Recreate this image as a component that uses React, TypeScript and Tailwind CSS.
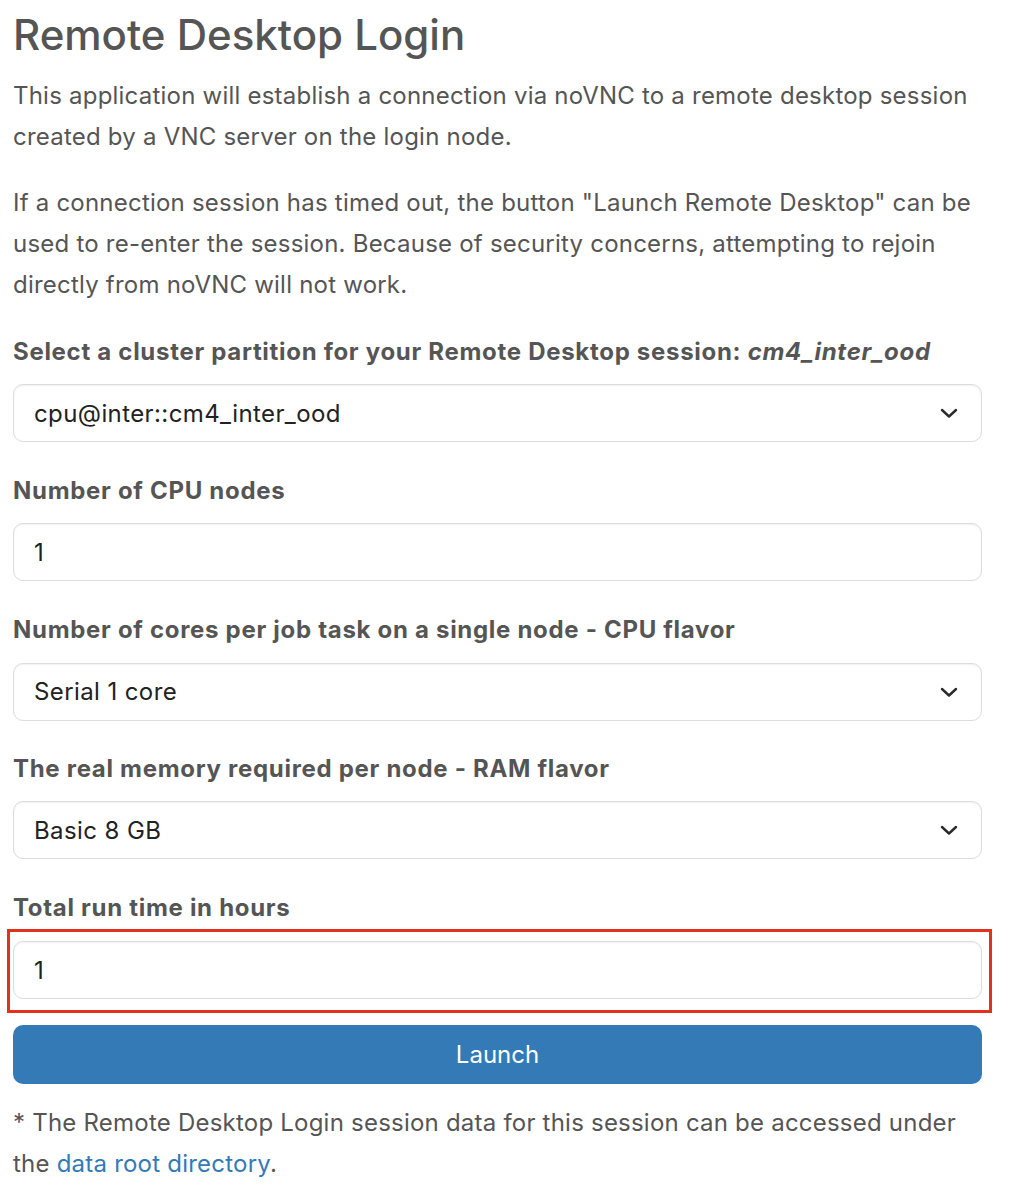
import React from "react";

function Chevron() {
  return (
    <svg width="18" height="12" viewBox="0 0 18 12" fill="none" className="shrink-0">
      <path d="M2 3 L9 9.5 L16 3" stroke="#2b2b2b" strokeWidth="2.4" strokeLinecap="round" strokeLinejoin="round" />
    </svg>
  );
}

function SelectBox({ value }: { value: string }) {
  return (
    <div className="flex h-[58px] items-center justify-between rounded-[10px] border border-[#dcdcdc] bg-white pl-[20px] pr-[23px] tracking-[0.4px] text-[#222] shadow-[inset_0_1px_2px_rgba(0,0,0,0.06)]">
      <span>{value}</span>
      <Chevron />
    </div>
  );
}

function InputBox({ value }: { value: string }) {
  return (
    <div className="flex h-[58px] items-center rounded-[10px] border border-[#dcdcdc] bg-white pl-[20px] tracking-[0.4px] text-[#222] shadow-[inset_0_1px_2px_rgba(0,0,0,0.06)]">
      <span>{value}</span>
    </div>
  );
}

function Label({ children }: { children: React.ReactNode }) {
  return <div className="font-bold leading-[41px] tracking-[0.7px] text-[#555]">{children}</div>;
}

export default function App() {
  return (
    <div
      className="w-[1010px] bg-white pl-[13px] pr-[28px] pt-[11px] text-[24px] leading-[41px] tracking-[0.22px] text-[#555]"
      style={{ fontFamily: "Inter, 'Liberation Sans', sans-serif" }}
    >
      <h1 className="text-[42px] font-medium leading-[48px] tracking-normal text-[#555]">Remote Desktop Login</h1>
      <p className="mt-[15.5px]">
        This application will establish a connection via noVNC to a remote desktop session created by a VNC server on the login node.
      </p>
      <p className="mt-[25px]">
        If a connection session has timed out, the button "Launch Remote Desktop" can be used to re-enter the session. Because of security concerns, attempting to rejoin directly from noVNC will not work.
      </p>

      <div className="mt-[26px]">
        <Label>
          Select a cluster partition for your Remote Desktop session: <i>cm4_inter_ood</i>
        </Label>
        <div className="mt-[12.5px]">
          <SelectBox value="cpu@inter::cm4_inter_ood" />
        </div>
      </div>

      <div className="mt-[27.5px]">
        <Label>Number of CPU nodes</Label>
        <div className="mt-[12.5px]">
          <InputBox value="1" />
        </div>
      </div>

      <div className="mt-[28px]">
        <Label>Number of cores per job task on a single node - CPU flavor</Label>
        <div className="mt-[12.5px]">
          <SelectBox value="Serial 1 core" />
        </div>
      </div>

      <div className="mt-[27px]">
        <Label>The real memory required per node - RAM flavor</Label>
        <div className="mt-[12.5px]">
          <SelectBox value="Basic 8 GB" />
        </div>
      </div>

      <div className="mt-[27.5px]">
        <Label>Total run time in hours</Label>
        <div className="relative mt-[13.5px]">
          <InputBox value="1" />
          <div className="pointer-events-none absolute -bottom-[14px] -left-[6px] -right-[10px] -top-[12px] border-[3px] border-[#e2321c]" />
        </div>
      </div>

      <button className="mt-[26px] flex h-[59px] w-full items-center justify-center rounded-[10px] bg-[#337ab7] tracking-normal text-white">
        Launch
      </button>

      <p className="mt-[17.5px] pb-[12px]">
        * The Remote Desktop Login session data for this session can be accessed under the{" "}
        <a className="text-[#337ab7]">data root directory</a>.
      </p>
    </div>
  );
}
